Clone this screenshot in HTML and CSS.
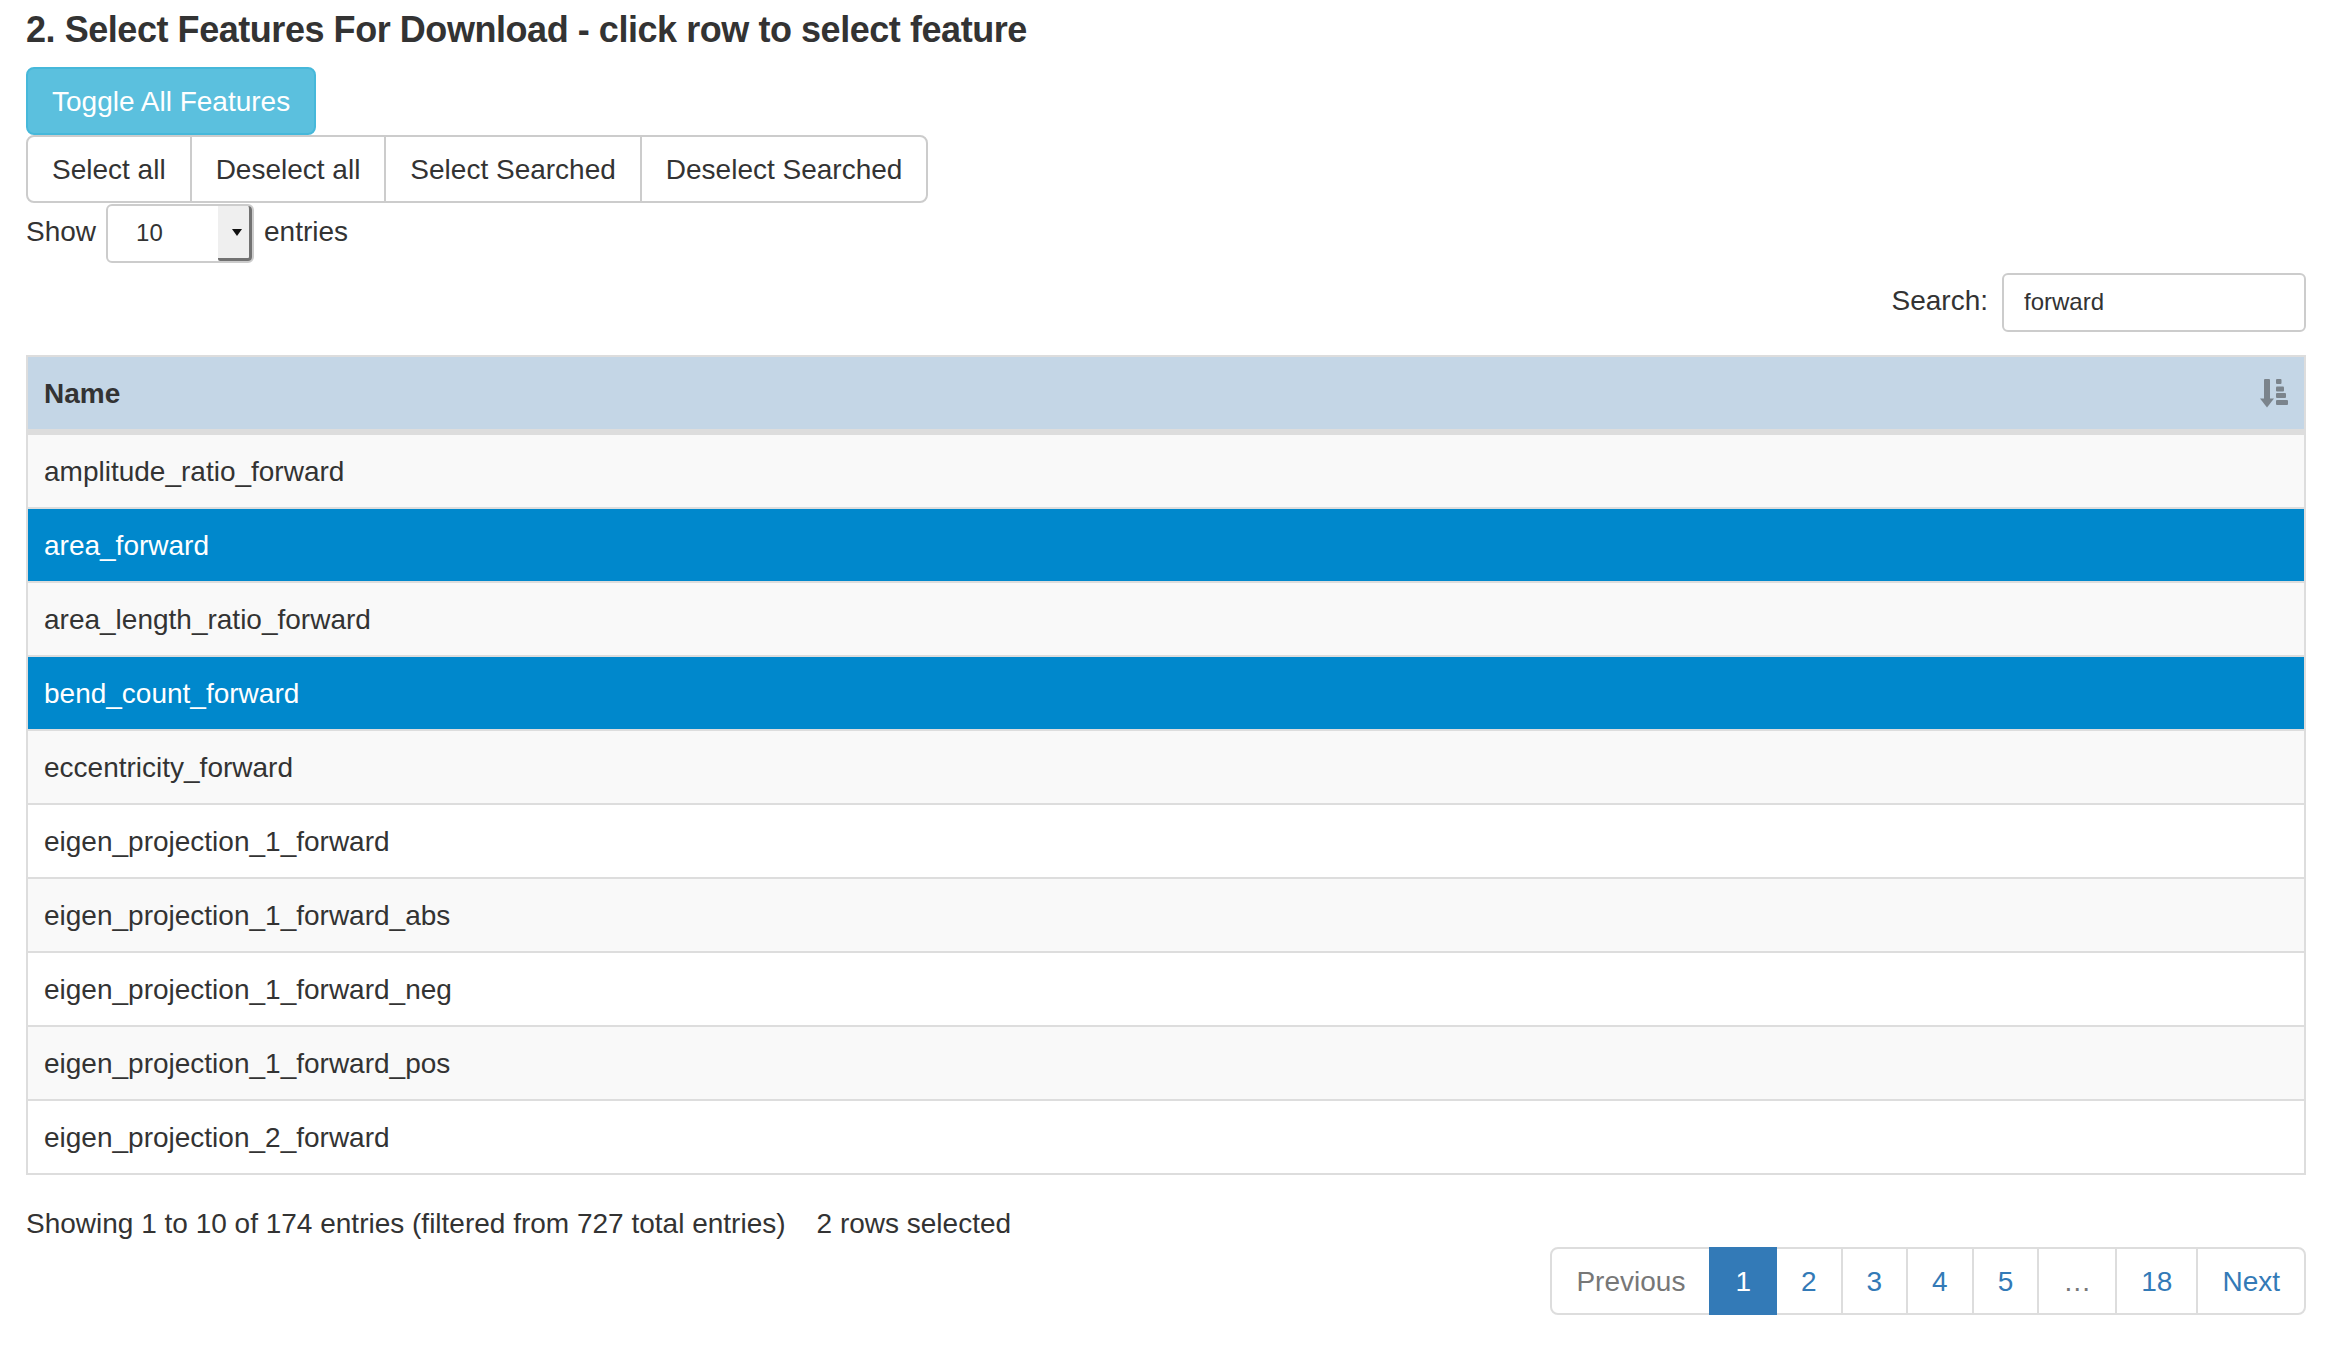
FILE: index.html
```html
<!DOCTYPE html>
<html lang="en">
<head>
<meta charset="utf-8">
<title>Select Features For Download</title>
<link rel="stylesheet" href="styles.css">
</head>
<body>
<div class="page">
  <h4 class="section-title">2. Select Features For Download - click row to select feature</h4>

  <div class="toolbar">
    <button class="btn btn-info" type="button">Toggle All Features</button>
    <div class="btn-group">
      <button class="btn btn-default" type="button">Select all</button>
      <button class="btn btn-default" type="button">Deselect all</button>
      <button class="btn btn-default" type="button">Select Searched</button>
      <button class="btn btn-default" type="button">Deselect Searched</button>
    </div>
  </div>

  <div class="length-row">
    <span class="length-text">Show</span>
    <span class="length-select">
      <select aria-label="entries per page">
        <option selected>10</option>
        <option>25</option>
        <option>50</option>
        <option>100</option>
      </select>
    </span>
    <span class="length-text">entries</span>
  </div>

  <div class="filter-row">
    <label for="search">Search:</label>
    <input id="search" class="search-input" type="text" value="forward">
  </div>

  <table class="features">
    <thead>
      <tr>
        <th>
          <div class="th-inner">
            <span>Name</span>
            <svg class="sort-icon" width="30" height="30" viewBox="0 0 30 30" aria-hidden="true">
              <rect x="5" y="1" width="6" height="21" rx="1"/>
              <path d="M1 20.5 H15 L8 29.5 Z"/>
              <rect x="17" y="1" width="5.5" height="5" rx="1"/>
              <rect x="17" y="8.5" width="8" height="5" rx="1"/>
              <rect x="17" y="15" width="10" height="5" rx="1"/>
              <rect x="17" y="22" width="12" height="5" rx="1"/>
            </svg>
          </div>
        </th>
      </tr>
    </thead>
    <tbody>
      <tr class="striped"><td>amplitude_ratio_forward</td></tr>
      <tr class="selected"><td>area_forward</td></tr>
      <tr class="striped"><td>area_length_ratio_forward</td></tr>
      <tr class="selected"><td>bend_count_forward</td></tr>
      <tr class="striped"><td>eccentricity_forward</td></tr>
      <tr><td>eigen_projection_1_forward</td></tr>
      <tr class="striped"><td>eigen_projection_1_forward_abs</td></tr>
      <tr><td>eigen_projection_1_forward_neg</td></tr>
      <tr class="striped"><td>eigen_projection_1_forward_pos</td></tr>
      <tr><td>eigen_projection_2_forward</td></tr>
    </tbody>
  </table>

  <div class="info">Showing 1 to 10 of 174 entries (filtered from 727 total entries)<span class="select-info">2 rows selected</span></div>

  <ul class="pagination">
    <li class="disabled"><span>Previous</span></li>
    <li class="active"><a href="#">1</a></li>
    <li><a href="#">2</a></li>
    <li><a href="#">3</a></li>
    <li><a href="#">4</a></li>
    <li><a href="#">5</a></li>
    <li class="disabled"><span>&hellip;</span></li>
    <li><a href="#">18</a></li>
    <li><a href="#">Next</a></li>
  </ul>
</div>
</body>
</html>
```

FILE: styles.css
```css
* {
  box-sizing: border-box;
}

html,
body {
  margin: 0;
  background: #fff;
}

body {
  font-family: "Liberation Sans", Arial, Helvetica, sans-serif;
  font-size: 28px;
  line-height: 40px;
  color: #333;
}

.page {
  padding: 10px 38px 0 26px;
}

.section-title {
  margin: 0 0 17px;
  font-size: 36px;
  line-height: 40px;
  font-weight: 700;
  letter-spacing: -0.45px;
  color: #333;
}

.toolbar {
  display: flex;
  flex-direction: column;
  align-items: flex-start;
}

.btn {
  font-family: inherit;
  font-size: 28px;
  line-height: 40px;
  padding: 13px 24px 11px;
  margin: 0;
  border: 2px solid transparent;
  border-radius: 8px;
  cursor: pointer;
}

.btn-info {
  color: #fff;
  background: #5bc0de;
  border-color: #46b8da;
}

.btn-group {
  display: flex;
}

.btn-default {
  color: #333;
  background: #fff;
  border-color: #ccc;
  border-radius: 0;
}

.btn-group .btn + .btn {
  margin-left: -2px;
}

.btn-group .btn:first-child {
  border-radius: 8px 0 0 8px;
}

.btn-group .btn:last-child {
  border-radius: 0 8px 8px 0;
}

.length-row {
  display: flex;
  align-items: center;
  gap: 10px;
  margin-top: 1px;
}

.length-text {
  padding-bottom: 3px;
}

.length-select {
  position: relative;
  display: block;
  width: 148px;
  height: 59px;
}

.length-select select {
  -webkit-appearance: none;
  appearance: none;
  width: 100%;
  height: 100%;
  margin: 0;
  padding: 0 0 3px 28px;
  border: 2px solid #ccc;
  border-radius: 6px;
  background: #fff;
  font-family: inherit;
  font-size: 24px;
  color: #333;
}

.length-select::after {
  content: "";
  position: absolute;
  top: 2px;
  right: 2px;
  bottom: 2px;
  width: 31px;
  background: #efefef;
  border-right: 3px solid #727272;
  border-bottom: 3px solid #727272;
  border-radius: 0 4px 4px 2px;
  pointer-events: none;
}

.length-select::before {
  content: "";
  position: absolute;
  z-index: 1;
  top: 25px;
  right: 12px;
  border-left: 5px solid transparent;
  border-right: 5px solid transparent;
  border-top: 7px solid #111;
  pointer-events: none;
}

.filter-row {
  display: flex;
  justify-content: flex-end;
  align-items: center;
  gap: 14px;
  margin-top: 10px;
}

.filter-row label {
  font-weight: normal;
  padding-bottom: 3px;
}

.search-input {
  width: 304px;
  height: 59px;
  margin: 0;
  padding: 0 20px 2px;
  border: 2px solid #ccc;
  border-radius: 6px;
  font-family: inherit;
  font-size: 24px;
  color: #333;
  background: #fff;
}

.features {
  width: 100%;
  margin-top: 23px;
  border-collapse: separate;
  border-spacing: 0;
  border: 2px solid #ddd;
}

.features th {
  text-align: left;
  background: #c4d6e6;
  padding: 17px 15px 15px 16px;
  border-bottom: 4px solid #ddd;
  font-weight: 700;
  line-height: 40px;
}

.th-inner {
  display: flex;
  justify-content: space-between;
  align-items: center;
}

.sort-icon {
  display: block;
  fill: #7b848c;
  margin-top: -2px;
}

.features td {
  padding: 17px 16px 15px;
  border-top: 2px solid #ddd;
  line-height: 40px;
  background: #fff;
}

.features tr.striped td {
  background: #f9f9f9;
}

.features tr.selected td {
  background: #0088cc;
  color: #fff;
}

.info {
  margin-top: 12px;
  padding-top: 17px;
  white-space: nowrap;
}

.select-info {
  margin-left: 31px;
}

.pagination {
  display: flex;
  justify-content: flex-end;
  margin: 3px 0 0;
  padding: 0;
  list-style: none;
}

.pagination a,
.pagination span {
  display: block;
  padding: 13px 24px 11px;
  margin-left: -2px;
  line-height: 40px;
  border: 2px solid #ddd;
  background: #fff;
  color: #337ab7;
  text-decoration: none;
}

.pagination li:first-child > * {
  margin-left: 0;
  border-radius: 8px 0 0 8px;
}

.pagination li:last-child > * {
  border-radius: 0 8px 8px 0;
}

.pagination .active > * {
  position: relative;
  z-index: 2;
  background: #337ab7;
  border-color: #337ab7;
  color: #fff;
}

.pagination .disabled > * {
  color: #777;
}
```
